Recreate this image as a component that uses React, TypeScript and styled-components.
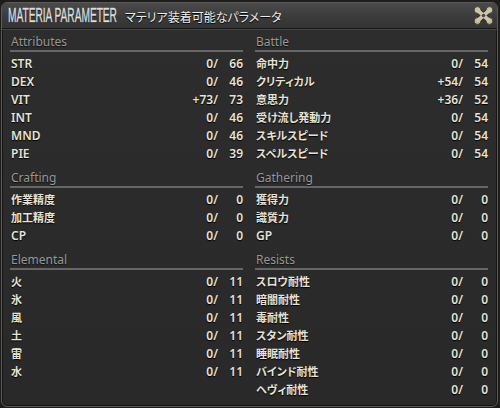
import React from "react";
import styled, { createGlobalStyle } from "styled-components";

const Global = createGlobalStyle`
  html, body { margin: 0; padding: 0; background: #1f1d1b; }
  body { width: 500px; height: 408px; overflow: hidden; font-family: "Noto Sans", "Noto Sans CJK JP", sans-serif; }
`;

const Window = styled.div`
  box-sizing: border-box;
  margin: 2px 2px 1px 1px;
  width: 497px;
  height: 405px;
  border: 1px solid #5a5a58;
  border-radius: 6px;
  background: linear-gradient(#2d2d2d, #292929);
  box-shadow: inset 0 0 0 1px #151515;
  display: flex;
  flex-direction: column;
  overflow: hidden;
`;

const TitleBar = styled.div`
  height: 25px;
  flex: 0 0 auto;
  display: flex;
  align-items: baseline;
  padding: 0 4px 0 6px;
  background: linear-gradient(#4a4a4a, #3a3a3a 60%, #353535);
  border-bottom: 1px solid #161616;
  box-shadow: 0 1px 0 #454545;
  position: relative;
`;

const TitleBox = styled.div`
  width: 117px;
  flex: 0 0 auto;
  white-space: nowrap;
  line-height: 25px;
`;

const TitleText = styled.span`
  display: inline-block;
  font-family: "Liberation Sans", Arial, sans-serif;
  font-size: 19.5px;
  color: #e2e2e2;
  -webkit-text-stroke: 0.4px #cfcfcf;
  transform: scaleX(0.52);
  transform-origin: left;
  text-shadow: 0 1px 1px #151515;
`;

const Subtitle = styled.span`
  font-family: "Noto Sans CJK JP", sans-serif;
  font-size: 12px;
  font-feature-settings: "palt";
  color: #ecebe6;
  text-shadow: 0 1px 1px #000;
`;

const CloseButton = styled.button`
  position: absolute;
  right: 3px;
  top: 2px;
  width: 22px;
  height: 21px;
  padding: 0;
  border: none;
  background: none;
  display: flex;
  align-items: center;
  justify-content: center;
`;

const Body = styled.div`
  display: grid;
  grid-template-columns: 233px 233px;
  column-gap: 12px;
  row-gap: 7px;
  align-items: start;
  padding: 4px 9px 0 8px;
`;

const Section = styled.section`
  display: flex;
  flex-direction: column;
`;

const Header = styled.div`
  height: 17px;
  line-height: 17px;
  font-size: 12px;
  color: #979797;
  padding-left: 1px;
  border-bottom: 2px solid #666;
  margin-bottom: 2px;
  text-shadow: 0 1px 1px #111;
`;

const Row = styled.div`
  display: flex;
  align-items: center;
  height: 18px;
  color: #e6e2d5;
  font-weight: 600;
  text-shadow: 0 1px 1px #000;
  white-space: nowrap;
`;

const Label = styled.span<{ $jp?: boolean }>`
  flex: 1;
  padding-left: 1px;
  font-size: ${(p) => (p.$jp ? "11px" : "12px")};
  font-weight: ${(p) => (p.$jp ? 700 : 600)};
  font-feature-settings: "palt";
`;

const Current = styled.span`
  font-size: 12px;
  text-align: right;
`;

const Max = styled.span`
  width: 25px;
  font-size: 12px;
  text-align: right;
`;

type Stat = [string, string, string];

const isJp = (s: string) => /[^\x00-\x7f]/.test(s);

const sections: { title: string; rows: Stat[] }[] = [
  {
    title: "Attributes",
    rows: [
      ["STR", "0", "66"],
      ["DEX", "0", "46"],
      ["VIT", "+73", "73"],
      ["INT", "0", "46"],
      ["MND", "0", "46"],
      ["PIE", "0", "39"],
    ],
  },
  {
    title: "Battle",
    rows: [
      ["命中力", "0", "54"],
      ["クリティカル", "+54", "54"],
      ["意思力", "+36", "52"],
      ["受け流し発動力", "0", "54"],
      ["スキルスピード", "0", "54"],
      ["スペルスピード", "0", "54"],
    ],
  },
  {
    title: "Crafting",
    rows: [
      ["作業精度", "0", "0"],
      ["加工精度", "0", "0"],
      ["CP", "0", "0"],
    ],
  },
  {
    title: "Gathering",
    rows: [
      ["獲得力", "0", "0"],
      ["識質力", "0", "0"],
      ["GP", "0", "0"],
    ],
  },
  {
    title: "Elemental",
    rows: [
      ["火", "0", "11"],
      ["氷", "0", "11"],
      ["風", "0", "11"],
      ["土", "0", "11"],
      ["雷", "0", "11"],
      ["水", "0", "11"],
    ],
  },
  {
    title: "Resists",
    rows: [
      ["スロウ耐性", "0", "0"],
      ["暗闇耐性", "0", "0"],
      ["毒耐性", "0", "0"],
      ["スタン耐性", "0", "0"],
      ["睡眠耐性", "0", "0"],
      ["バインド耐性", "0", "0"],
      ["ヘヴィ耐性", "0", "0"],
    ],
  },
];

const CloseIcon = () => (
  <svg width="21" height="19" viewBox="0 0 21 19">
    <path d="M5 4.5 L16 14.5 M16 4.5 L5 14.5" stroke="#2e2a23" strokeWidth="5.6" strokeLinecap="round" />
    <g stroke="#2e2a23" strokeWidth="0.8">
      <circle cx="4.5" cy="4" r="3.4" fill="#cdc5ab" />
      <circle cx="16.5" cy="4" r="3.4" fill="#cdc5ab" />
      <circle cx="4.5" cy="15" r="3.4" fill="#c3bba1" />
      <circle cx="16.5" cy="15" r="3.4" fill="#c3bba1" />
    </g>
    <path d="M5.5 5 L15.5 14 M15.5 5 L5.5 14" stroke="#cdc5ab" strokeWidth="3.8" strokeLinecap="round" />
    <circle cx="10.5" cy="9.5" r="1.8" fill="#4e4940" />
  </svg>
);

export default function App() {
  return (
    <>
      <Global />
      <Window>
        <TitleBar>
          <TitleBox>
            <TitleText>MATERIA PARAMETER</TitleText>
          </TitleBox>
          <Subtitle>マテリア装着可能なパラメータ</Subtitle>
          <CloseButton aria-label="close">
            <CloseIcon />
          </CloseButton>
        </TitleBar>
        <Body>
          {sections.map((s) => (
            <Section key={s.title}>
              <Header>{s.title}</Header>
              {s.rows.map(([label, cur, max]) => (
                <Row key={label}>
                  <Label $jp={isJp(label)}>{label}</Label>
                  <Current>{cur}/</Current>
                  <Max>{max}</Max>
                </Row>
              ))}
            </Section>
          ))}
        </Body>
      </Window>
    </>
  );
}
